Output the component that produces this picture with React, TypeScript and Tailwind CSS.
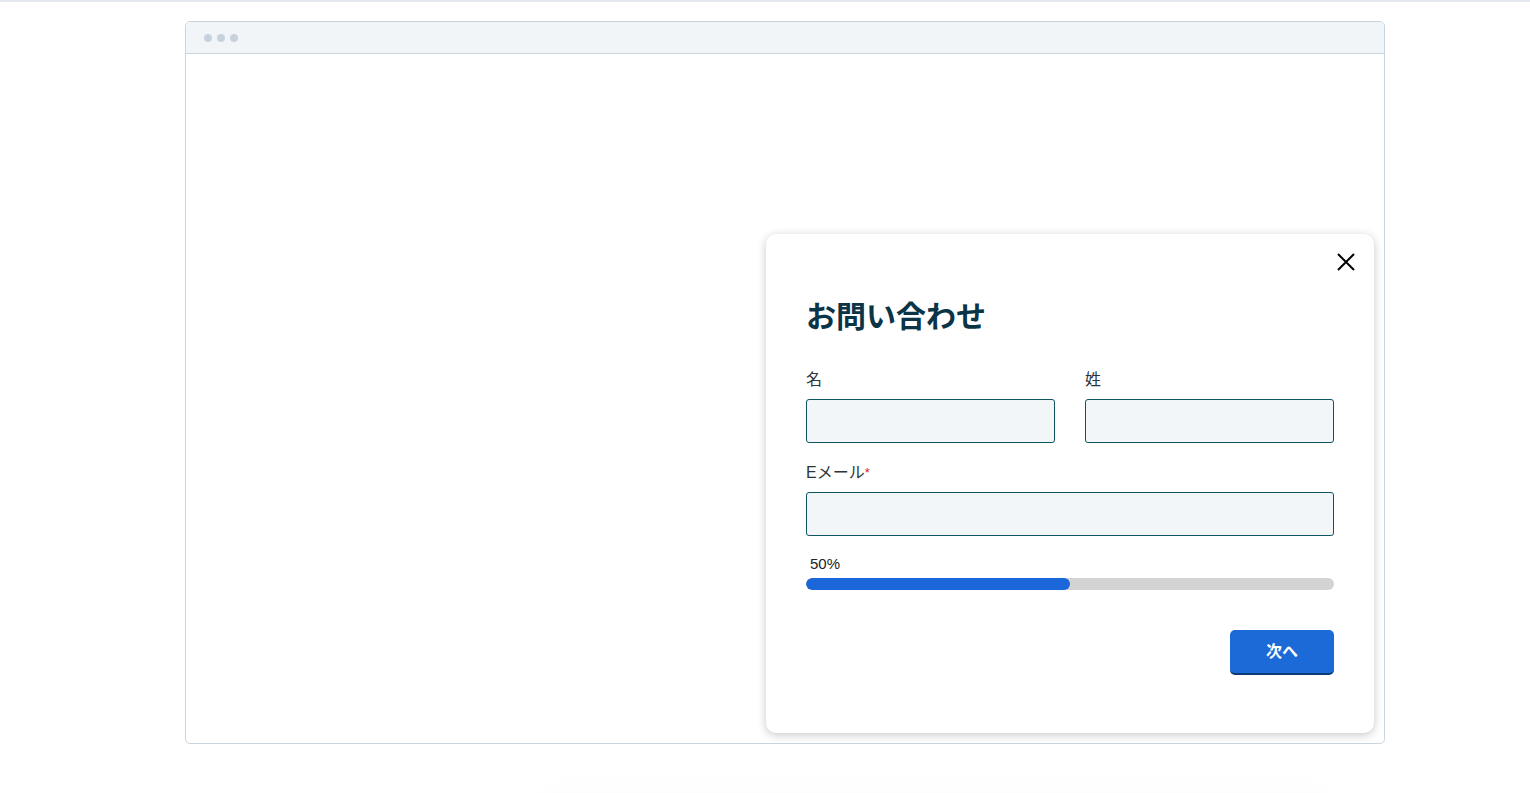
import React, { useState } from 'react';

const font = { fontFamily: '"Liberation Sans", "Noto Sans CJK JP", sans-serif' };

const Field: React.FC<{ label: string; required?: boolean; className?: string }> = ({ label, required, className }) => (
  <div className={className}>
    <label className="block text-[16px] leading-6 text-[#2d3339]">
      {label}
      {required && <span className="text-[#e0182d] text-[13px] align-top">*</span>}
    </label>
    <input
      type="text"
      className="mt-[7px] block w-full h-[44px] rounded-[3px] border border-[#0e5560] bg-[#f2f6f9] px-3 outline-none"
    />
  </div>
);

export default function App() {
  const [progress] = useState(50);

  return (
    <div className="h-[793px] bg-white border-t-2 border-[#e4e7ee] overflow-hidden" style={font}>
      <div className="ml-[185px] mt-[19px] w-[1200px] h-[723px] rounded-[5px] border border-[#c9d4df] relative overflow-hidden">
        {/* window bar */}
        <div className="h-[32px] bg-[#f2f5f8] border-b border-[#c9d4df] flex items-center gap-[5px] pl-[18px]">
          <span className="w-[8px] h-[8px] rounded-full bg-[#c6d3df]" />
          <span className="w-[8px] h-[8px] rounded-full bg-[#c6d3df]" />
          <span className="w-[8px] h-[8px] rounded-full bg-[#c6d3df]" />
        </div>

        {/* form widget */}
        <div className="absolute right-[10px] bottom-[10px] w-[608px] h-[499px] bg-white rounded-[10px] shadow-[0_2px_10px_rgba(0,0,0,0.22)] px-10 pt-[61px]">
          <button className="absolute right-[16px] top-[16px] w-[24px] h-[24px] flex items-center justify-center text-black">
            <svg width="20" height="20" viewBox="0 0 20 20" fill="none" stroke="currentColor" strokeWidth="2">
              <path d="M2 2 L18 18 M18 2 L2 18" />
            </svg>
          </button>

          <h2 className="text-[30px] leading-[38px] font-bold text-[#0b3446]" style={{ fontFamily: '"Noto Sans CJK JP", sans-serif' }}>
            お問い合わせ
          </h2>

          <div className="mt-[35px] grid grid-cols-2 gap-x-[30px]">
            <Field label="名" />
            <Field label="姓" />
          </div>

          <Field label="Eメール" required className="mt-[18px]" />

          <div className="mt-[19px]">
            <div className="pl-[4px] text-[15px] leading-[18px] text-[#222]">{progress}%</div>
            <div className="mt-[5px] h-[12px] rounded-full bg-[#d3d3d3] overflow-hidden">
              <div className="h-full rounded-full bg-[#1b66d9]" style={{ width: `${progress}%` }} />
            </div>
          </div>

          <div className="mt-[40px] flex justify-end">
            <button className="w-[104px] h-[45px] pb-[3px] rounded-[5px] bg-[#1b6ad8] border-b-2 border-[#0d3b73] text-white text-[16px] font-bold" style={{ fontFamily: '"Noto Sans CJK JP", sans-serif' }}>
              次へ
            </button>
          </div>
        </div>
      </div>

      {/* faint panel below */}
      <div className="ml-[545px] mt-[34px] w-[780px] h-[60px] bg-gradient-to-b from-white to-[#f7f7f7] blur-[6px]" />
    </div>
  );
}
